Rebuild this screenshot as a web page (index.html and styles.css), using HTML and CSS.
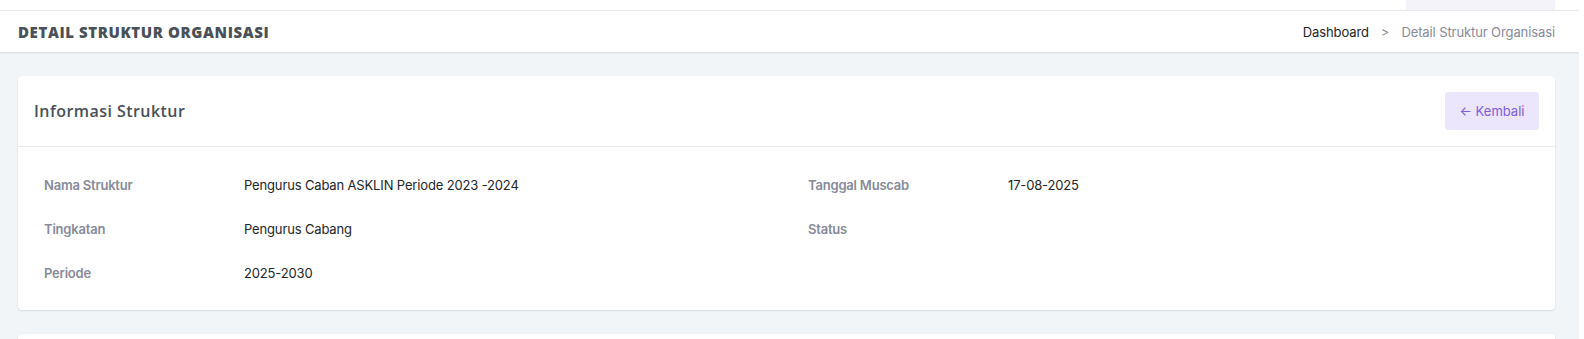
FILE: index.html
```html
<!DOCTYPE html>
<html lang="en">
<head>
  <meta charset="UTF-8">
  <meta name="viewport" content="width=device-width, initial-scale=1.0">
  <title>Detail Struktur Organisasi</title>
  <link rel="stylesheet" href="styles.css">
</head>
<body>
  <div class="page">
    <div class="topbar">
      <div class="topbar-tab"></div>
    </div>
    <div class="page-title">
      <h4>Detail Struktur Organisasi</h4>
      <ol class="breadcrumb">
        <li>Dashboard</li>
        <li class="sep">&gt;</li>
        <li class="active">Detail Struktur Organisasi</li>
      </ol>
    </div>
    <div class="content">
      <div class="card">
        <div class="card-header">
          <h5>Informasi Struktur</h5>
          <button class="btn-back">&larr; Kembali</button>
        </div>
        <div class="card-body">
          <div class="info-grid">
            <div class="info-row"><span class="label">Nama Struktur</span><span class="value">Pengurus Caban ASKLIN Periode 2023 -2024</span></div>
            <div class="info-row"><span class="label">Tanggal Muscab</span><span class="value">17-08-2025</span></div>
            <div class="info-row"><span class="label">Tingkatan</span><span class="value">Pengurus Cabang</span></div>
            <div class="info-row"><span class="label">Status</span><span class="value"></span></div>
            <div class="info-row"><span class="label">Periode</span><span class="value">2025-2030</span></div>
          </div>
        </div>
      </div>
      <div class="card card-next"></div>
    </div>
  </div>
</body>
</html>
```

FILE: styles.css
```css
body {
  margin: 0;
  font-family: Inter, "Open Sans", sans-serif;
  background-color: #ffffff;
  overflow: hidden;
}

.page {
  width: 1579px;
  height: 339px;
  overflow: hidden;
  background-color: #f2f5f8;
}

.topbar {
  height: 10px;
  background-color: #ffffff;
  border-bottom: 1px solid #e9ebef;
  display: flex;
  justify-content: flex-end;
  padding-right: 24px;
}

.topbar-tab {
  width: 149px;
  background-color: #f3f3f9;
}

.page-title {
  height: 41px;
  background-color: #ffffff;
  box-shadow: 0 1px 2px rgba(56, 65, 74, 0.15);
  display: flex;
  align-items: center;
  justify-content: space-between;
  padding: 0 24px 0 18px;
}

.page-title h4 {
  margin: 0;
  font-family: "Open Sans", sans-serif;
  font-size: 15px;
  font-weight: 800;
  text-transform: uppercase;
  color: #495057;
  letter-spacing: 0.6px;
}

.breadcrumb {
  list-style: none;
  margin: 0;
  padding: 0;
  display: flex;
  gap: 12px;
  font-size: 13px;
  color: #212529;
  letter-spacing: -0.1px;
}

.breadcrumb .sep {
  color: #878a99;
}

.breadcrumb .active {
  color: #878a99;
}

.content {
  padding: 24px 24px 0 18px;
}

.card {
  background-color: #ffffff;
  border-radius: 4px;
  box-shadow: 0 1px 2px rgba(56, 65, 74, 0.15);
}

.card-header {
  height: 70px;
  display: flex;
  align-items: center;
  justify-content: space-between;
  padding: 0 16px;
  border-bottom: 1px solid #e9ebec;
}

.card-header h5 {
  margin: 0;
  font-family: "Open Sans", sans-serif;
  font-size: 16px;
  font-weight: 600;
  letter-spacing: 0.45px;
  color: #495057;
}

.btn-back {
  width: 94px;
  height: 38px;
  border: none;
  border-radius: 4px;
  background-color: #ebe6fb;
  color: #7e5ce0;
  font-family: Inter, sans-serif;
  font-size: 13px;
  cursor: pointer;
}

.card-body {
  padding: 16px 26px 15px;
}

.info-grid {
  display: grid;
  grid-template-columns: 764px 1fr;
}

.info-row {
  display: flex;
  height: 44px;
  align-items: center;
  font-size: 13px;
}

.info-row .label {
  width: 200px;
  color: #878a99;
  font-weight: 600;
  letter-spacing: -0.2px;
}

.info-row .value {
  color: #212529;
  letter-spacing: -0.15px;
}

.card-next {
  margin-top: 24px;
  height: 20px;
}
```
